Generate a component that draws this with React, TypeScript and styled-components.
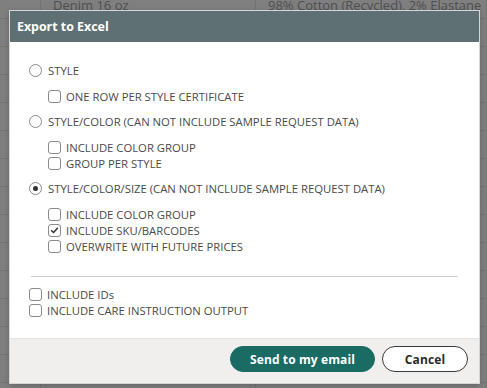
import React, { useState } from 'react'
import styled, { createGlobalStyle } from 'styled-components'

const GlobalStyle = createGlobalStyle`
  html, body {
    margin: 0;
    padding: 0;
    font-family: "Open Sans", "Liberation Sans", sans-serif;
  }
`

const Page = styled.div`
  position: relative;
  width: 487px;
  height: 388px;
  overflow: hidden;
  background: #7f7f7f;
`

const Table = styled.div`
  display: flex;
  flex-direction: column;
  margin-top: -9px;
`

const TableRow = styled.div`
  display: grid;
  grid-template-columns: 41px 215px 1fr;
  height: 28px;
  border-bottom: 1px solid #747474;
  box-sizing: border-box;
`

const Cell = styled.div`
  border-right: 1px solid #747474;
  padding: 0 12px;
  display: flex;
  align-items: center;
  font-size: 13px;
  color: #4f4f4f;
  white-space: nowrap;
  overflow: hidden;
`

const Modal = styled.div`
  position: absolute;
  left: 9px;
  top: 10px;
  width: 471px;
  height: 374px;
  box-sizing: border-box;
  display: flex;
  flex-direction: column;
  background: #fff;
  border: 1px solid #d6d6d6;
  box-shadow: 0 2px 6px rgba(0, 0, 0, 0.2);
`

const Header = styled.div`
  height: 31px;
  flex-shrink: 0;
  background: #5e7074;
  color: #fff;
  font-weight: 700;
  font-size: 12.4px;
  display: flex;
  align-items: center;
  padding-left: 7px;
`

const Body = styled.div`
  flex: 1;
  padding: 20px 21px 0 19px;
`

const Section = styled.div`
  margin-bottom: 9px;
`

const Line = styled.label<{ $indent?: boolean }>`
  display: flex;
  align-items: center;
  height: 16px;
  gap: ${({ $indent }) => ($indent ? '5px' : '6px')};
  font-size: 11.3px;
  color: #4a4a4a;
  text-transform: uppercase;
  cursor: pointer;
  white-space: nowrap;
`

const PlainLine = styled(Line)`
  text-transform: none;
  gap: 5px;
`

const SubList = styled.div`
  margin-top: 10px;
  padding-left: 19px;
  display: flex;
  flex-direction: column;
`

const RadioCircle = styled.span<{ $on: boolean }>`
  width: 13px;
  height: 13px;
  border-radius: 50%;
  border: 1px solid #8a8a8a;
  box-sizing: border-box;
  display: flex;
  align-items: center;
  justify-content: center;
  flex-shrink: 0;
  background: #fff;

  &::after {
    content: '';
    width: 5px;
    height: 5px;
    border-radius: 50%;
    background: #333;
    display: ${({ $on }) => ($on ? 'block' : 'none')};
  }
`

const Box = styled.span`
  width: 13px;
  height: 13px;
  border-radius: 3px;
  border: 1px solid #8a8a8a;
  box-sizing: border-box;
  display: flex;
  align-items: center;
  justify-content: center;
  flex-shrink: 0;
  background: #fff;
`

const Divider = styled.hr`
  border: none;
  border-top: 1px solid #cfcfcf;
  margin: 22px 0 9px 2px;
`

const Footer = styled.div`
  height: 45px;
  flex-shrink: 0;
  background: #f0efed;
  border-top: 1px solid #e2e2e2;
  box-sizing: border-box;
  display: flex;
  justify-content: flex-end;
  align-items: flex-start;
  gap: 7px;
  padding: 7px 11px 0 0;
`

const Button = styled.button<{ $primary?: boolean }>`
  height: 26px;
  border-radius: 13px;
  font-family: inherit;
  font-weight: 700;
  font-size: 12px;
  letter-spacing: 0.1px;
  padding: 0;
  cursor: pointer;
  width: ${({ $primary }) => ($primary ? '145px' : '86px')};
  background: ${({ $primary }) => ($primary ? '#1a6b63' : '#fff')};
  color: ${({ $primary }) => ($primary ? '#fff' : '#2b2b2b')};
  border: 1px solid ${({ $primary }) => ($primary ? '#1a6b63' : '#3a3a3a')};
`

const Check = ({ checked }: { checked: boolean }) => (
  <Box>
    {checked && (
      <svg width="9" height="9" viewBox="0 0 10 10">
        <path d="M1.8 5.2 L4 7.3 L8.2 2.6" fill="none" stroke="#333" strokeWidth="1.7" strokeLinecap="round" strokeLinejoin="round" />
      </svg>
    )}
  </Box>
)

const rows = [
  ['', 'Denim 16 oz', '98% Cotton (Recycled), 2% Elastane'],
  ...Array.from({ length: 14 }, () => ['', '', '']),
]

type Mode = 'style' | 'color' | 'size'

export default function App() {
  const [mode, setMode] = useState<Mode>('size')
  const [opts, setOpts] = useState<Record<string, boolean>>({ sku: true })
  const toggle = (k: string) => setOpts((o) => ({ ...o, [k]: !o[k] }))

  const sub = (key: string, label: string) => (
    <Line $indent key={key} onClick={() => toggle(key)}>
      <Check checked={!!opts[key]} />
      {label}
    </Line>
  )

  return (
    <Page>
      <GlobalStyle />
      <Table>
        {rows.map((r, i) => (
          <TableRow key={i}>
            {r.map((c, j) => (
              <Cell key={j}>{c}</Cell>
            ))}
          </TableRow>
        ))}
      </Table>

      <Modal>
        <Header>Export to Excel</Header>
        <Body>
          <Section>
            <Line onClick={() => setMode('style')}>
              <RadioCircle $on={mode === 'style'} />
              Style
            </Line>
            <SubList>{sub('oneRow', 'One row per style certificate')}</SubList>
          </Section>
          <Section>
            <Line onClick={() => setMode('color')}>
              <RadioCircle $on={mode === 'color'} />
              Style/Color (can not include sample request data)
            </Line>
            <SubList>
              {sub('colorGroup1', 'Include color group')}
              {sub('groupPerStyle', 'Group per style')}
            </SubList>
          </Section>
          <Section>
            <Line onClick={() => setMode('size')}>
              <RadioCircle $on={mode === 'size'} />
              Style/Color/Size (can not include sample request data)
            </Line>
            <SubList>
              {sub('colorGroup2', 'Include color group')}
              {sub('sku', 'Include SKU/Barcodes')}
              {sub('future', 'Overwrite with future prices')}
            </SubList>
          </Section>
          <Divider />
          <PlainLine onClick={() => toggle('ids')}>
            <Check checked={!!opts.ids} />
            INCLUDE IDs
          </PlainLine>
          <PlainLine onClick={() => toggle('care')}>
            <Check checked={!!opts.care} />
            INCLUDE CARE INSTRUCTION OUTPUT
          </PlainLine>
        </Body>
        <Footer>
          <Button $primary>Send to my email</Button>
          <Button>Cancel</Button>
        </Footer>
      </Modal>
    </Page>
  )
}
